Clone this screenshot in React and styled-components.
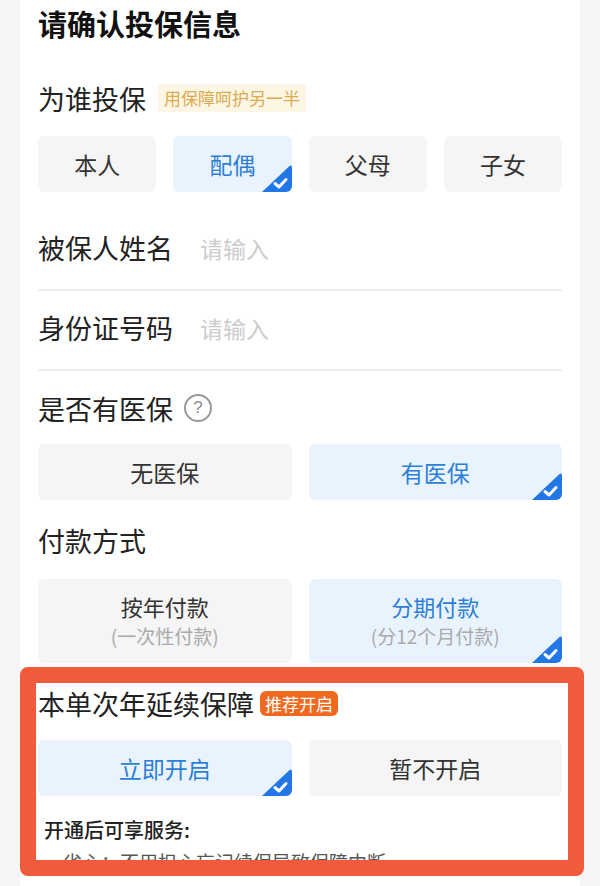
import React from 'react';
import styled, { createGlobalStyle } from 'styled-components';

const GlobalStyle = createGlobalStyle`
  html, body {
    margin: 0;
    padding: 0;
    background: #f5f5f5;
    font-family: "Noto Sans CJK SC", "Noto Sans", sans-serif;
    color: #222;
  }
`;

const Card = styled.div`
  margin: 0 20px;
  padding: 0 18px 40px;
  background: #ffffff;
  min-height: 886px;
  box-sizing: border-box;
`;

const Title = styled.h1`
  margin: 0;
  font-size: 29px;
  font-weight: 700;
  line-height: 46px;
  color: #111;
`;

const SectionHead = styled.div`
  display: flex;
  align-items: center;
  height: 26px;
  margin-top: ${props => props.top || 0}px;
  margin-bottom: ${props => props.bottom || 24}px;
  font-size: 27px;
  color: #222;
  white-space: nowrap;
`;

const HintTag = styled.span`
  margin-left: 12px;
  padding: 0 6px;
  height: 28px;
  line-height: 28px;
  font-size: 17px;
  color: #dcaa50;
  background: #fdf6e4;
  border-radius: 3px;
`;

const HotTag = styled.span`
  margin-left: 6px;
  padding: 0 5px;
  height: 25px;
  line-height: 25px;
  font-size: 17px;
  color: #ffffff;
  background: #ef6a1f;
  border-radius: 6px;
`;

const Help = styled.span`
  margin-left: 11px;
  width: 24px;
  height: 24px;
  border: 2px solid #9a9a9a;
  border-radius: 50%;
  display: inline-flex;
  align-items: center;
  justify-content: center;
  font-family: "Liberation Sans", sans-serif;
  font-size: 17px;
  color: #8a8a8a;
`;

const Options = styled.div`
  display: grid;
  grid-template-columns: repeat(${props => props.cols}, 1fr);
  gap: 17px;
`;

const Option = styled.div`
  position: relative;
  overflow: hidden;
  height: ${props => props.tall ? 84 : 56}px;
  border-radius: 6px;
  background: ${props => props.active ? '#e9f3fe' : '#f5f5f5'};
  color: ${props => props.active ? '#2d7fd6' : '#333'};
  display: flex;
  flex-direction: column;
  align-items: center;
  justify-content: center;
  font-size: ${props => props.tall ? 22 : 23}px;
  line-height: 30px;
`;

const OptionSub = styled.span`
  font-size: 19px;
  color: #aaaaaa;
`;

const Corner = styled.svg`
  position: absolute;
  right: 0;
  bottom: 0;
`;

const Field = styled.div`
  display: flex;
  align-items: center;
  padding: 24px 0 28px;
  margin-top: ${props => props.top || 0}px;
  border-bottom: 2px solid #eeeeee;
`;

const FieldLabel = styled.span`
  width: 162px;
  font-size: 27px;
  line-height: 26px;
  color: #222;
`;

const FieldInput = styled.input`
  flex: 1;
  border: none;
  outline: none;
  padding: 0;
  background: transparent;
  font-family: inherit;
  font-size: 23px;
  line-height: 26px;
  color: #333;
  &::placeholder {
    color: #cccccc;
  }
`;

const Highlight = styled.section`
  margin: 4px -22px 0 -18px;
  border: 16px solid #ef5b3b;
  border-radius: 8px;
  background: #ffffff;
`;

const HighlightInner = styled.div`
  height: 177px;
  overflow: hidden;
  padding: 7px 6px 0 2px;
  box-sizing: border-box;
`;

const Benefits = styled.div`
  margin-top: 20px;
  padding-left: 6px;
`;

const BenefitsHead = styled.div`
  font-size: 20px;
  font-weight: 500;
  line-height: 28px;
  color: #222;
`;

const BenefitLine = styled.div`
  margin-top: 4px;
  font-size: 19px;
  line-height: 28px;
  color: #555;
`;

function Check() {
  return (
    <Corner width="30" height="27" viewBox="0 0 30 27">
      <path d="M0 27 L27 1.5 Q30 -1 30 3 L30 27 Z" fill="#2277e6" />
      <path d="M13 18.5 L17 22 L24 14.5" fill="none" stroke="#fff" strokeWidth="3" strokeLinecap="round" strokeLinejoin="round" />
    </Corner>
  );
}

function Choice({ active, tall, children, sub }) {
  return (
    <Option active={active} tall={tall}>
      <span>{children}</span>
      {sub && <OptionSub>{sub}</OptionSub>}
      {active && <Check />}
    </Option>
  );
}

export default function App() {
  return (
    <>
      <GlobalStyle />
      <Card>
        <Title>请确认投保信息</Title>

        <SectionHead top={39} bottom={25}>
          为谁投保
          <HintTag>用保障呵护另一半</HintTag>
        </SectionHead>
        <Options cols={4}>
          <Choice>本人</Choice>
          <Choice active>配偶</Choice>
          <Choice>父母</Choice>
          <Choice>子女</Choice>
        </Options>

        <Field top={19}>
          <FieldLabel>被保人姓名</FieldLabel>
          <FieldInput placeholder="请输入" />
        </Field>
        <Field>
          <FieldLabel>身份证号码</FieldLabel>
          <FieldInput placeholder="请输入" />
        </Field>

        <SectionHead top={24} bottom={23}>
          是否有医保
          <Help>?</Help>
        </SectionHead>
        <Options cols={2}>
          <Choice>无医保</Choice>
          <Choice active>有医保</Choice>
        </Options>

        <SectionHead top={27} bottom={26}>付款方式</SectionHead>
        <Options cols={2}>
          <Choice tall sub="(一次性付款)">按年付款</Choice>
          <Choice tall active sub="(分12个月付款)">分期付款</Choice>
        </Options>

        <Highlight>
          <HighlightInner>
            <SectionHead bottom={24}>
              本单次年延续保障
              <HotTag>推荐开启</HotTag>
            </SectionHead>
            <Options cols={2}>
              <Choice active>立即开启</Choice>
              <Choice>暂不开启</Choice>
            </Options>
            <Benefits>
              <BenefitsHead>开通后可享服务:</BenefitsHead>
              <BenefitLine>·省心：不用担心忘记续保导致保障中断</BenefitLine>
            </Benefits>
          </HighlightInner>
        </Highlight>
      </Card>
    </>
  );
}
